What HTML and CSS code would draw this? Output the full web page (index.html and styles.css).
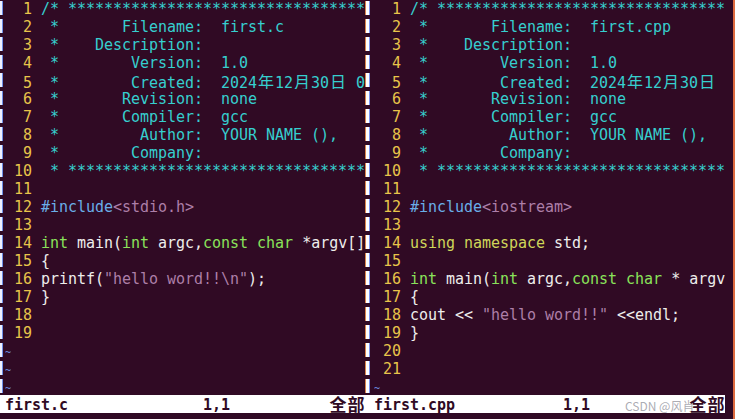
FILE: index.html
```html
<!DOCTYPE html>
<html>
<head>
<meta charset="utf-8">
<title>vim split</title>
<link rel="stylesheet" href="styles.css">
</head>
<body>
<div class="screen">
  <div class="term">
    <div class="panes">
      <div class="edge"></div>
      <div class="pane pane-left">
        <div class="row"><span class="ln">  1 </span><span class="cm">/* ********************************************</span></div>
        <div class="row"><span class="ln">  2 </span><span class="cm"> *       Filename:  first.c</span></div>
        <div class="row"><span class="ln">  3 </span><span class="cm"> *    Description:  </span></div>
        <div class="row"><span class="ln">  4 </span><span class="cm"> *        Version:  1.0</span></div>
        <div class="row"><span class="ln">  5 </span><span class="cm"> *        Created:  2024<span class="w">年</span>12<span class="w">月</span>30<span class="w">日</span> 0</span></div>
        <div class="row"><span class="ln">  6 </span><span class="cm"> *       Revision:  none</span></div>
        <div class="row"><span class="ln">  7 </span><span class="cm"> *       Compiler:  gcc</span></div>
        <div class="row"><span class="ln">  8 </span><span class="cm"> *         Author:  YOUR NAME (), </span></div>
        <div class="row"><span class="ln">  9 </span><span class="cm"> *        Company:  </span></div>
        <div class="row"><span class="ln"> 10 </span><span class="cm"> * ********************************************</span></div>
        <div class="row"><span class="ln"> 11 </span></div>
        <div class="row"><span class="ln"> 12 </span><span class="pp">#include</span><span class="str">&lt;stdio.h&gt;</span></div>
        <div class="row"><span class="ln"> 13 </span></div>
        <div class="row"><span class="ln"> 14 </span><span class="ty">int</span> main(<span class="ty">int</span> argc,<span class="ty">const</span> <span class="ty">char</span> *argv[]</div>
        <div class="row"><span class="ln"> 15 </span>{</div>
        <div class="row"><span class="ln"> 16 </span>printf(<span class="str">"hello word!!\n"</span>);</div>
        <div class="row"><span class="ln"> 17 </span>}</div>
        <div class="row"><span class="ln"> 18 </span></div>
        <div class="row"><span class="ln"> 19 </span></div>
        <div class="row"><span class="tl">~</span></div>
        <div class="row"><span class="tl">~</span></div>
        <div class="row"><span class="tl">~</span></div>
      </div>
      <div class="vsep"></div>
      <div class="pane pane-right">
        <div class="row"><span class="ln">  1 </span><span class="cm">/* ********************************</span></div>
        <div class="row"><span class="ln">  2 </span><span class="cm"> *       Filename:  first.cpp</span></div>
        <div class="row"><span class="ln">  3 </span><span class="cm"> *    Description:  </span></div>
        <div class="row"><span class="ln">  4 </span><span class="cm"> *        Version:  1.0</span></div>
        <div class="row"><span class="ln">  5 </span><span class="cm"> *        Created:  2024<span class="w">年</span>12<span class="w">月</span>30<span class="w">日</span></span></div>
        <div class="row"><span class="ln">  6 </span><span class="cm"> *       Revision:  none</span></div>
        <div class="row"><span class="ln">  7 </span><span class="cm"> *       Compiler:  gcc</span></div>
        <div class="row"><span class="ln">  8 </span><span class="cm"> *         Author:  YOUR NAME (), </span></div>
        <div class="row"><span class="ln">  9 </span><span class="cm"> *        Company:  </span></div>
        <div class="row"><span class="ln"> 10 </span><span class="cm"> * ********************************</span></div>
        <div class="row"><span class="ln"> 11 </span></div>
        <div class="row"><span class="ln"> 12 </span><span class="pp">#include</span><span class="str">&lt;iostream&gt;</span></div>
        <div class="row"><span class="ln"> 13 </span></div>
        <div class="row"><span class="ln"> 14 </span><span class="kw">using</span> <span class="kw">namespace</span> std;</div>
        <div class="row"><span class="ln"> 15 </span></div>
        <div class="row"><span class="ln"> 16 </span><span class="ty">int</span> main(<span class="ty">int</span> argc,<span class="ty">const</span> <span class="ty">char</span> * argv</div>
        <div class="row"><span class="ln"> 17 </span>{</div>
        <div class="row"><span class="ln"> 18 </span>cout &lt;&lt; <span class="str">"hello word!!"</span> &lt;&lt;endl;</div>
        <div class="row"><span class="ln"> 19 </span>}</div>
        <div class="row"><span class="ln"> 20 </span></div>
        <div class="row"><span class="ln"> 21 </span></div>
        <div class="row"><span class="tl">~</span></div>
      </div>
    </div>
    <div class="status">
      <div class="st-edge"></div>
      <div class="st st-left">first.c               1,1           <span class="wb">全</span><span class="wb">部</span></div>
      <div class="st-sep"></div>
      <div class="st st-right">first.cpp            1,1           <span class="wb">全</span><span class="wb">部</span></div>
    </div>
    <div class="cmdline"></div>
  </div>
  <div class="desk"></div>
  <div class="watermark">CSDN @风肖</div>
</div>
</body>
</html>
```

FILE: styles.css
```css
html, body {
  margin: 0;
  padding: 0;
  background: #300a24;
  overflow: hidden;
}

.screen {
  display: flex;
  width: 735px;
  height: 419px;
  position: relative;
}

.term {
  width: 733px;
  height: 419px;
  flex: none;
  background: #300a24;
  display: flex;
  flex-direction: column;
  overflow: hidden;
  font-family: "DejaVu Sans Mono", monospace;
  font-size: 15px;
  letter-spacing: -0.03px;
  color: #eeeeec;
}

.desk {
  width: 2px;
  flex: none;
  background: #dc6a3f;
}

.panes {
  display: flex;
  height: 396px;
  margin-top: -1px;
  flex: none;
}

.edge {
  width: 5px;
  flex: none;
  background:
    repeating-linear-gradient(to bottom, #300a24 0 2px, transparent 2px 16px, #300a24 16px 18px),
    linear-gradient(to right, #eef0ff 0 2px, #6f8fe8 2px 3px, transparent 3px);
}

.vsep {
  width: 9px;
  flex: none;
  background:
    repeating-linear-gradient(to bottom, #300a24 0 2px, transparent 2px 16px, #300a24 16px 18px),
    linear-gradient(to right, #d9844f 0 1px, #ffffff 1px 4px, #7f95f0 4px 5px, transparent 5px);
}

.pane {
  flex: none;
  overflow: hidden;
}

.pane-left { width: 360px; }
.pane-right { width: 351px; }

.row {
  height: 18px;
  line-height: 20px;
  white-space: pre;
  overflow: hidden;
}

.ln { color: #e8c44a; }
.cm { color: #36cfcf; }
.pp { color: #6aaee8; }
.str { color: #ad7fa8; }
.ty { color: #8ae25a; }
.kw { color: #cfd65a; }

.tl {
  color: #6c8fe0;
  font-size: 10px;
  display: inline-block;
  width: 9px;
}

.w {
  display: inline-block;
  width: 18px;
  text-align: center;
  font-family: "Noto Sans CJK SC", sans-serif;
  font-size: 16px;
  letter-spacing: 0;
}

.status {
  display: flex;
  width: 725px;
  height: 18px;
  background: #ffffff;
  flex: none;
}

.st-edge { width: 5px; flex: none; }
.st-sep { width: 9px; flex: none; }

.st {
  flex: none;
  white-space: pre;
  line-height: 20px;
  height: 18px;
  overflow: hidden;
  color: #300a24;
  font-weight: bold;
}

.st-left { width: 360px; }
.st-right { width: 351px; }

.wb {
  display: inline-block;
  width: 18px;
  text-align: center;
  font-family: "Noto Sans CJK SC", sans-serif;
  font-size: 17px;
  font-weight: bold;
  letter-spacing: 0;
  line-height: 18px;
  vertical-align: top;
  position: relative;
  z-index: 2;
}

.cmdline {
  flex: 1;
}

.watermark {
  position: absolute;
  left: 625px;
  top: 399px;
  font-family: "Noto Sans CJK SC", sans-serif;
  font-size: 12px;
  line-height: 14px;
  color: rgba(150, 150, 160, 0.8);
  white-space: nowrap;
  z-index: 1;
}
```
